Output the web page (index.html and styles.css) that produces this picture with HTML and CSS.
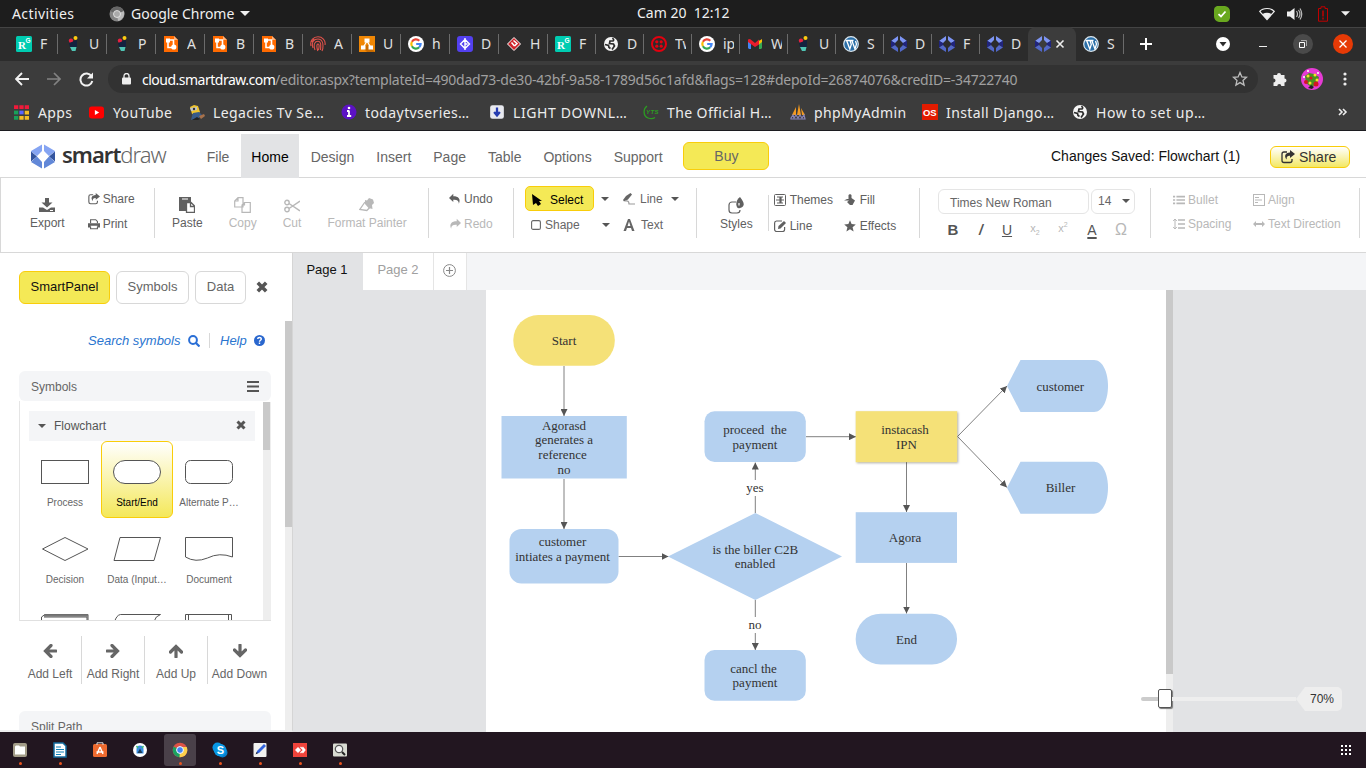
FILE: index.html
```html
<!DOCTYPE html>
<html lang="en">
<head>
<meta charset="utf-8">
<title>SmartDraw - Flowchart</title>
<link rel="stylesheet" href="styles.css">
</head>
<body>
<svg class="defs" aria-hidden="true">
  <defs>
    <marker id="arrow" viewBox="0 0 7 7" refX="7" refY="3.500" markerWidth="7" markerHeight="7" markerUnits="userSpaceOnUse" orient="auto"><path d="M0 0L7 3.500L0 7z" fill="#555"/></marker>
  </defs>
  <symbol id="rg" viewBox="0 0 16 16"><rect width="16" height="16" rx="1.500" fill="#00ccb1"/><text x="2" y="13" font-family="Liberation Serif" font-size="11" font-weight="bold" fill="#fff">R</text><text x="9.500" y="7" font-family="Liberation Sans" font-size="6.500" font-weight="bold" fill="#fff">G</text></symbol>
  <symbol id="pot" viewBox="0 0 16 16"><circle cx="10.500" cy="2" r="2" fill="#fc1"/><circle cx="6" cy="4.700" r="2.200" fill="#e8213f"/><path d="M4 7l8-3v7H5z" fill="#14213f"/><path d="M5 11h6.500l-1 4H7z" fill="#4fc4b5"/></symbol>
  <symbol id="blog" viewBox="0 0 16 16"><path d="M1 0h10l4 4v12H1z" fill="#ff6a00"/><path d="M11 0v4h4z" fill="#ffb27a"/><path d="M5 5v6.500h4M6 4h4.500v5" fill="none" stroke="#fff" stroke-width="1.600"/><path d="M3 2.500h4v4H3z" fill="#fff"/><circle cx="10.800" cy="11" r="2.600" fill="#fff"/></symbol>
  <symbol id="whorl" viewBox="0 0 16 16"><g fill="none" stroke="#e0524a" stroke-width="1.100"><path d="M1 10C-.5 4 4 .8 8 .8S16 4 15 9M3 12C1 6 4 3 8 3s5.500 4 4.800 9M5 14C3 8 5 5.200 8 5.200S11 9 10.500 14M7.800 15c-1-3-1.500-7 .2-7s1 4 .5 6M12 15l1-3M2 6l2-3"/></g></symbol>
  <symbol id="drawio" viewBox="0 0 16 16"><rect width="16" height="16" fill="#f08705"/><path d="M9 9l7 7H8l-5-5z" fill="#c96b00"/><path d="M8 5L4.500 11M8 5l3.500 6" stroke="#fff" stroke-width="1.300"/><path d="M5.500 2.500h5v4h-5zM2 9.500h4.500v4H2zM9.500 9.500H14v4H9.500z" fill="#fff"/></symbol>
  <symbol id="google" viewBox="0 0 16 16"><circle cx="8" cy="8" r="8" fill="#fff"/><g fill="none" stroke-width="2.200"><path d="M11.300 4.700A4.700 4.700 0 0 0 3.900 5.700" stroke="#ea4335"/><path d="M3.900 5.700a4.700 4.700 0 0 0 0 4.600" stroke="#fbbc05"/><path d="M3.900 10.300a4.700 4.700 0 0 0 7.300 1" stroke="#34a853"/><path d="M11.200 11.300A4.700 4.700 0 0 0 12.600 8H8.200" stroke="#4285f4"/></g></symbol>
  <symbol id="dgit" viewBox="0 0 16 16"><rect width="16" height="16" rx="3" fill="#5340f0"/><path d="M8 3.500L12.500 8 8 12.500 3.500 8zM8 2v12M8 8h2.500" fill="none" stroke="#fff" stroke-width="1.400"/></symbol>
  <symbol id="vp" viewBox="0 0 16 16"><path d="M8 1.500L14.500 8 8 14.500 1.500 8z" fill="#d2232a" stroke="#fff"/><path d="M7.500 4.500l3.500 3-2.500 2.500M5.500 6.500L8.500 10" fill="none" stroke="#fff" stroke-width="1.500"/></symbol>
  <symbol id="globe" viewBox="0 0 16 16"><circle cx="8" cy="8" r="7" fill="#f5f5f5"/><path d="M9.500 2q2 2 .5 3H7L6.500 7.500l4 .5 1 2L9 13.500M2 8.500l3.500 1 .5 2 1.500 1" fill="none" stroke="#2c2c2c" stroke-width="1.700"/></symbol>
  <symbol id="twilio" viewBox="0 0 16 16"><circle cx="8" cy="8" r="7" fill="none" stroke="#e3000f" stroke-width="2"/><g fill="#e3000f"><circle cx="5.800" cy="5.800" r="1.600"/><circle cx="10.200" cy="5.800" r="1.600"/><circle cx="5.800" cy="10.200" r="1.600"/><circle cx="10.200" cy="10.200" r="1.600"/></g></symbol>
  <symbol id="gmail" viewBox="0 0 16 16"><path d="M1 4.500h3V13H2l-1-1z" fill="#4285f4"/><path d="M12 4.500h3V12l-1 1h-2z" fill="#34a853"/><path d="M12 5l3-2v3l-3 2.500z" fill="#fbbc04"/><path d="M1 3.500L3 3l5 4 4-3.500V8.500L8 11 1 6z" fill="#ea1c2c"/></symbol>
  <symbol id="wp" viewBox="0 0 16 16"><circle cx="8" cy="8" r="7.300" fill="#2a6fa8" stroke="#dce8f0" stroke-width="1.200"/><path d="M2.500 4.500h4M3.800 5l3 8L8.300 8.500 7 4.500h3.500M9 5l3 8 1.500-5-1-3" fill="none" stroke="#fff" stroke-width="1.300"/></symbol>
  <symbol id="sd" viewBox="0 0 16 16"><path d="M7 0v4L4 7 0 5zM9 0v4l3 3 4-2z" fill="#7d95f5"/><path d="M0 4.500L5 8l-5 3.500zM16 4.500L11 8l5 3.500z" fill="#20247e"/><path d="M7 16v-4L4 9l-4 2.500zM9 16v-4l3-3 4 2.500z" fill="#5268c8"/></symbol>
  <symbol id="caret" viewBox="0 0 8 4"><path d="M0 0h8L4 4z" fill="currentColor"/></symbol>
  <symbol id="x" viewBox="0 0 10 10"><path d="M1.500 1.500l7 7M8.500 1.500l-7 7" stroke="currentColor" stroke-width="3"/></symbol>
  <symbol id="share" viewBox="0 0 14 14"><path d="M6 2H3a2 2 0 0 0-2 2v6.500a2 2 0 0 0 2 2h6a2 2 0 0 0 2-2V9" fill="none" stroke="currentColor" stroke-width="1.300"/><path d="M9 0L14 4 9 8V5.800C6.500 5.600 5.200 6.800 5.800 9.500 2.800 6.500 4 2.600 9 2.400z" fill="currentColor"/></symbol>
  <symbol id="undo" viewBox="0 0 14 12"><path d="M5 0v2.800c6 0 9 3 6.500 8.700C11.600 8 9.500 6.500 5 6.800v2.700L0 4.700z" fill="currentColor"/></symbol>
  <symbol id="list" viewBox="0 0 14 12"><path d="M4 2h10M4 6h10M4 10h10M0 2h2.500M0 6h2.500M0 10h2.500" stroke="currentColor" stroke-width="2"/></symbol>
  <symbol id="arr" viewBox="0 0 14 14"><path d="M13 7H3M8 1.500L2.500 7 8 12.500" fill="none" stroke="#666" stroke-width="3.200" stroke-linecap="round"/></symbol>
</svg>

<header class="system-bar">
  <span class="activities">Activities</span>
  <svg class="chrome-mini" viewBox="0 0 16 16"><circle cx="8" cy="8" r="7.500" fill="#858585"/><path d="M8 8L1 5a8 8 0 0 1 14 0z" fill="#666"/><path d="M8 8l7-3a8 8 0 0 1-6 10z" fill="#bbb"/><circle cx="8" cy="8" r="3.500" fill="#aaa" stroke="#eee" stroke-width=".8"/></svg>
  <span class="app-name">Google Chrome</span>
  <svg class="app-caret"><use href="#caret"/></svg>
  <span class="clock">Cam 20&nbsp; 12:12</span>
  <div class="tray">
    <svg width="16" height="16" viewBox="0 0 16 16"><path d="M3 0h8q5 1 5 6v6q-1 4-4 4H5q-5-1-5-6V4q0-3 3-4z" fill="#69a81f"/><path d="M4.500 8.200L7 10.500l4.500-5" fill="none" stroke="#fff" stroke-width="1.800"/></svg>
    <svg class="wifi" viewBox="0 0 16 14"><path d="M.7 4.500C4 .5 12 .5 15.300 4.500L8 12.500z" fill="none" stroke="#eee" stroke-width="1.200"/><path d="M3.500 7q4.500-2.500 9 0L8 12.500z" fill="#eee"/></svg>
    <svg class="volume" viewBox="0 0 16 14"><path d="M0 4.500h3L7.500 1v12L3 9.500H0z" fill="#eee"/><path d="M9.500 4q2 3 0 6M11.500 3q3 4 0 8M13 1.500q3.500 5.500 0 11" fill="none" stroke="#bbb" stroke-width="1.200"/></svg>
    <svg class="battery" viewBox="0 0 10 16"><path d="M.5 2.500H3V.8h4v1.700h2.500v12.700h-9z" fill="none" stroke="#c00000"/><path d="M5 4.500v6M5 11.500v2" stroke="#c00000" stroke-width="1.500"/></svg>
    <svg class="tray-caret"><use href="#caret"/></svg>
  </div>
</header>

<nav class="tab-strip">
  <div class="tab wide"><svg><use href="#rg"/></svg><span>F</span></div>
  <div class="tab wide"><svg><use href="#pot"/></svg><span>U</span></div>
  <div class="tab wide"><svg><use href="#pot"/></svg><span>P</span></div>
  <div class="tab wide"><svg><use href="#blog"/></svg><span>A</span></div>
  <div class="tab wide"><svg><use href="#blog"/></svg><span>B</span></div>
  <div class="tab wide"><svg><use href="#blog"/></svg><span>B</span></div>
  <div class="tab wide"><svg><use href="#whorl"/></svg><span>A</span></div>
  <div class="tab wide"><svg><use href="#drawio"/></svg><span>U</span></div>
  <div class="tab wide"><svg><use href="#google"/></svg><span>h</span></div>
  <div class="tab wide"><svg><use href="#dgit"/></svg><span>D</span></div>
  <div class="tab wide"><svg><use href="#vp"/></svg><span>H</span></div>
  <div class="tab"><svg><use href="#rg"/></svg><span>F</span></div>
  <div class="tab"><svg><use href="#globe"/></svg><span>D</span></div>
  <div class="tab"><svg><use href="#twilio"/></svg><span>Tw</span></div>
  <div class="tab"><svg><use href="#google"/></svg><span>ip</span></div>
  <div class="tab"><svg><use href="#gmail"/></svg><span>W</span></div>
  <div class="tab"><svg><use href="#pot"/></svg><span>U</span></div>
  <div class="tab"><svg><use href="#wp"/></svg><span>S</span></div>
  <div class="tab"><svg><use href="#sd"/></svg><span>D</span></div>
  <div class="tab"><svg><use href="#sd"/></svg><span>F</span></div>
  <div class="tab before-active"><svg><use href="#sd"/></svg><span>D</span></div>
  <div class="tab active"><svg><use href="#sd"/></svg><svg class="tab-close" viewBox="0 0 10 10"><path d="M1.500 1.500l7 7M8.500 1.500l-7 7" stroke="#eee" stroke-width="1.600"/></svg></div>
  <div class="tab"><svg><use href="#wp"/></svg><span>S</span></div>
  <svg class="new-tab" viewBox="0 0 12 12"><path d="M6 0v12M0 6h12" stroke="#fff" stroke-width="2"/></svg>
  <div class="window-controls">
    <svg width="14" height="14" viewBox="0 0 14 14"><circle cx="7" cy="7" r="7" fill="#fff"/><path d="M3.500 5h7L7 9.500z" fill="#2c2c2c"/></svg>
    <svg width="8" height="14" viewBox="0 0 8 14"><path d="M0 9.500h8" stroke="#eee"/></svg>
    <svg width="20" height="20" viewBox="0 0 20 20"><circle cx="10" cy="10" r="10" fill="#4a4a4a"/><path d="M6.500 8.500h5v5h-5z" fill="none" stroke="#fff"/><path d="M8 6.500h5.500V12" fill="none" stroke="#aaa"/></svg>
    <svg width="20" height="20" viewBox="0 0 20 20"><circle cx="10" cy="10" r="10" fill="#e63a06"/><path d="M6.500 6.500l7 7M13.500 6.500l-7 7" stroke="#fff" stroke-width="1.300"/></svg>
  </div>
</nav>

<div class="address-bar">
  <svg width="14" height="14" viewBox="0 0 14 14"><path d="M14 7H1.500M7 1L1 7l6 6" fill="none" stroke="#f2f2f2" stroke-width="1.900"/></svg>
  <svg class="forward" width="14" height="14" viewBox="0 0 14 14"><path d="M0 7h12.500M7 1l6 6-6 6" fill="none" stroke="#828282" stroke-width="1.700"/></svg>
  <svg class="reload" width="15" height="15" viewBox="0 0 15 15"><path d="M12.500 4.300A6 6 0 1 0 13.300 9" fill="none" stroke="#f2f2f2" stroke-width="2"/><path d="M14 .5v6H8z" fill="#f2f2f2"/></svg>
  <div class="url">
    <svg width="9" height="12" viewBox="0 0 9 12"><path d="M2 5V3a2.500 2.500 0 0 1 5 0v2" fill="none" stroke="#eee" stroke-width="1.300"/><rect y="4.500" width="9" height="7" rx="1" fill="#eee"/></svg>
    <span class="host">cloud.smartdraw.com</span><span class="path">/editor.aspx?templateId=490dad73-de30-42bf-9a58-1789d56c1afd&amp;flags=128#depoId=26874076&amp;credID=-34722740</span>
    <svg class="star" viewBox="0 0 16 16"><path d="M8 1.500l1.900 4.400 4.600.4-3.500 3.100 1.100 4.700L8 11.600l-4.100 2.500L5 9.400 1.500 6.300l4.600-.4z" fill="none" stroke="#bdbdbd" stroke-width="1.300"/></svg>
  </div>
  <svg class="puzzle" viewBox="0 0 16 16"><path d="M1.500 4H5a2 2 0 1 1 4 0h3.500v3.500a2 2 0 1 1 0 4V15H9.300a2 2 0 0 0-4 0H1.500v-3.500a2 2 0 0 0 0-4z" fill="#eee"/></svg>
  <svg class="avatar" viewBox="0 0 22 22"><circle cx="11" cy="11" r="11" fill="#e63bd5"/><path d="M4 8l4-3 5 1 5 3-2 7-6 3-5-4z" fill="#4a8f22"/><g fill="#f3e229"><circle cx="7" cy="8" r="1.500"/><circle cx="14" cy="7" r="1.500"/><circle cx="9" cy="15" r="1.500"/><circle cx="16" cy="12" r="1.500"/></g><g fill="#d31722"><circle cx="5" cy="14" r="2"/><circle cx="15" cy="16" r="2.500"/><circle cx="10" cy="10" r="1.500"/></g><g fill="#fff"><circle cx="7" cy="3" r="1"/><circle cx="17" cy="5" r="1"/><circle cx="3" cy="9" r="1"/></g><path d="M10 17l3 2-2 2-4-1z" fill="#222"/></svg>
  <svg class="dots" viewBox="0 0 4 14"><g fill="#eee"><circle cx="2" cy="2" r="1.600"/><circle cx="2" cy="7" r="1.600"/><circle cx="2" cy="12" r="1.600"/></g></svg>
</div>

<div class="bookmarks">
  <div class="bm b-apps"><svg viewBox="0 0 14 14"><path d="M0 2h4M5 2h4M10 2h4" stroke="#f01a3a" stroke-width="3.500"/><path d="M0 7h4" stroke="#18a05a" stroke-width="3.500"/><path d="M5 7h4" stroke="#5a65ff" stroke-width="3.500"/><path d="M10 7h4M5 12h4M10 12h4" stroke="#f3bd24" stroke-width="3.500"/><path d="M0 12h4" stroke="#18a05a" stroke-width="3.500"/></svg><span>Apps</span></div>
  <div class="bm b-yt"><svg viewBox="0 0 14 12"><rect y=".5" width="14" height="11" rx="2.500" fill="#f00"/><path d="M5.500 3.700L9.500 6l-4 2.300z" fill="#fff"/></svg><span>YouTube</span></div>
  <div class="bm b-leg"><svg viewBox="0 0 16 16"><path d="M1 3l4-2 4 1 2 6-3 3-5-1z" fill="#efc42d"/><path d="M1 4l7-1v3L2 7z" fill="#bfc3cc"/><circle cx="5" cy="5" r="1.200" fill="#333"/><path d="M4 9l6-1 3 3-4 4-7 1 1-4z" fill="#375b89"/><path d="M10 12l5-2 1 2-4 3z" fill="#a6714b"/><path d="M8 13l3 2-2 1H3z" fill="#222"/></svg><span>Legacies Tv Se…</span></div>
  <div class="bm b-tod"><svg viewBox="0 0 16 16"><circle cx="8" cy="8" r="7.500" fill="#5c12c4"/><path d="M8 6.500v5M6 7h2M6 12h4.200" stroke="#fff" stroke-width="1.800"/><circle cx="8" cy="4" r="1.300" fill="#fff"/></svg><span>todaytvseries…</span></div>
  <div class="bm b-light"><svg viewBox="0 0 14 14"><rect x="1" y="1" width="12" height="12" rx="2" fill="#e8e9ef"/><path d="M7 3v7M4.500 7L7 10l2.500-3" fill="none" stroke="#263cb0" stroke-width="2"/></svg><span>LIGHT DOWNL…</span></div>
  <div class="bm b-off"><svg viewBox="0 0 16 16"><path d="M4 2C0 5 0 12 5 14q4 1.500 7-.5" fill="none" stroke="#2c9b22" stroke-width="1.300"/><text x="3" y="10" font-size="6" font-family="Liberation Sans" font-weight="bold" font-style="italic" fill="#2c9b22">YTS</text></svg><span>The Official H…</span></div>
  <div class="bm b-php"><svg viewBox="0 0 16 16"><path d="M2 11L6 3v8zM7 11L9 0l2 11zM11 4l4 7h-3z" fill="#f39a20"/><path d="M1 14l2-3 1 3 2-3 2 3 2-3 2 3 2-3 1 4H1z" fill="none" stroke="#8885bb" stroke-width="1.200"/></svg><span>phpMyAdmin</span></div>
  <div class="bm b-os"><svg viewBox="0 0 16 16"><rect width="16" height="16" fill="#e21b00"/><text x="1" y="11.500" font-size="9.500" textLength="14" font-family="Liberation Sans" font-weight="bold" fill="#fff">OS</text></svg><span>Install Django…</span></div>
  <div class="bm b-how"><svg viewBox="0 0 16 16"><use href="#globe"/></svg><span>How to set up…</span></div>
  <svg class="more" viewBox="0 0 10 8"><path d="M1 1l3 3-3 3M5 1l3 3-3 3" fill="none" stroke="#eee" stroke-width="1.600"/></svg>
</div>

<div class="menu-bar">
  <svg class="logo" viewBox="0 0 24 24"><path d="M11 0v6.500L6 11.500 0 7V6.500zM13 0v6.500l5 5L24 7V6.500z" fill="#85a4f2"/><path d="M0 7l6 5-6 5zM24 7l-6 5 6 5z" fill="#34559f"/><path d="M0 17.500L6 12l5 5.500V24zM24 17.500L18 12l-5 5.500V24z" fill="#6288d8"/></svg>
  <div class="wordmark"><b>smart</b>draw</div>
  <a>File</a><a class="current">Home</a><a>Design</a><a>Insert</a><a>Page</a><a>Table</a><a>Options</a><a>Support</a>
  <button class="buy">Buy</button>
  <span class="saved">Changes Saved: Flowchart (1)</span>
  <button class="share-btn"><svg><use href="#share"/></svg>Share</button>
</div>

<div class="ribbon">
  <section class="grp g-file">
    <div class="big"><svg width="16" height="16" viewBox="0 0 16 16"><path d="M6 1h4v4.500h3.500L8 10.500 2.500 5.500H6z" fill="currentColor"/><path d="M0 10.500h4l4 2.500 4-2.500h4V15H0z" fill="currentColor"/><path d="M11 13.500h3" stroke="#fff"/></svg>Export</div>
    <div class="stack">
      <div class="it"><svg class="i12"><use href="#share"/></svg>Share</div>
      <div class="it"><svg class="i12" viewBox="0 0 14 12"><path d="M3 5V1h6l2 2v2M3 9v2.500h8V9" fill="none" stroke="currentColor" stroke-width="1.300"/><path d="M0 5h14v5h-3V8H3v2H0z" fill="currentColor"/></svg>Print</div>
    </div>
  </section>
  <section class="grp g-clip">
    <div class="big"><svg width="16" height="16" viewBox="0 0 16 16"><path d="M0 0h12v5H7v9H0z" fill="currentColor"/><path d="M3 2h6" stroke="#fff"/><path d="M7.500 5.500h4.500L15.500 9v6.500h-8zM11.500 5.500V9.500h4" fill="#fff" stroke="currentColor" stroke-width="1.300"/></svg>Paste</div>
    <div class="big off copy"><svg width="17" height="16" viewBox="0 0 17 16"><path d="M4 .7h5V10H.7V4zM4 .7V4H.7M10.500 5.500h5.800v9.800H8V8zM10.500 5.500V8H8" fill="#fff" stroke="currentColor" stroke-width="1.200"/></svg>Copy</div>
    <div class="big off cut"><svg width="16" height="14" viewBox="0 0 16 14"><path d="M5 4.500L16 12M5 9.500L16 2" stroke="currentColor" stroke-width="1.500"/><circle cx="3" cy="3.500" r="2.200" fill="none" stroke="currentColor" stroke-width="1.400"/><circle cx="3" cy="10.500" r="2.200" fill="none" stroke="currentColor" stroke-width="1.400"/></svg>Cut</div>
    <div class="big off fmt"><svg width="16" height="16" viewBox="0 0 16 16"><path d="M6 3l2 .5L10 1l4 1.500L15 6l-2 2 .5 4-4-1L6 7z" fill="currentColor"/><path d="M6 5L.8 12.500l7 1 3-3" fill="none" stroke="currentColor" stroke-width="1.300"/></svg>Format Painter</div>
  </section>
  <section class="grp g-undo">
    <div class="stack"><div class="it"><svg class="i12"><use href="#undo"/></svg>Undo</div><div class="it off"><svg class="i12 flip"><use href="#undo"/></svg>Redo</div></div>
  </section>
  <section class="grp g-tools">
    <div class="toolcol first">
      <div class="row"><div class="select"><svg width="10" height="12" viewBox="0 0 10 12"><path d="M0 0l10 7H7l2 3-3 2-2-3-3 2z" fill="#000"/></svg>Select</div><svg class="car"><use href="#caret"/></svg></div>
      <div class="row shape-row"><svg width="10" height="10" viewBox="0 0 10 10"><rect x=".6" y=".6" width="8.800" height="8.800" rx="1.500" fill="none" stroke="currentColor" stroke-width="1.100"/></svg><span>Shape</span><svg class="car"><use href="#caret"/></svg></div>
    </div>
    <div class="toolcol second">
      <div class="row"><svg class="pen" viewBox="0 0 12 12"><path d="M7.500 0L9 1.500 5 6.500l-4 2L0 7 3 3z" fill="currentColor"/><path d="M2 8q4-1 4 3h6" fill="none" stroke="#999" stroke-width="1.200"/></svg><span>Line</span><svg class="car"><use href="#caret"/></svg></div>
      <div class="row"><svg class="pen" viewBox="0 0 12 12"><path d="M5 0h2l4.500 12H9L8 9H4l-1 3H.5zM6 2.500L4.600 7h2.800z" fill="currentColor" fill-rule="evenodd"/></svg><span class="txt">Text</span></div>
    </div>
  </section>
  <section class="grp g-styles">
    <div class="big"><svg width="17" height="18" viewBox="0 0 17 18"><path d="M8 5H4a3 3 0 0 0-3 3v5a3 3 0 0 0 3 3h5a3 3 0 0 0 3-3" fill="none" stroke="currentColor" stroke-width="1.200"/><path d="M12 0q4 5 3.700 7.500T12 11 8.300 7.500 12 0z" fill="currentColor"/><path d="M11 6v2.500" stroke="#fff" stroke-width="1.200"/></svg>Styles</div>
    <div class="rule"></div>
    <div class="pair themes">
      <div class="it"><svg class="i12" viewBox="0 0 12 12"><rect x=".5" y=".5" width="11" height="11" rx="1" fill="none" stroke="currentColor"/><path d="M3 3h3v6H3M9 3H7v6h2M2 6h8" fill="none" stroke="currentColor" stroke-width="1.200"/></svg>Themes</div>
      <div class="it"><svg class="i12" viewBox="0 0 12 12"><path d="M8 1H2.500A2 2 0 0 0 .6 3v6.500a2 2 0 0 0 2 2h6a2 2 0 0 0 2-2V7" fill="none" stroke="currentColor" stroke-width="1.200"/><path d="M4 9l.5-3L10 1l2 2-5.500 5.500z" fill="currentColor"/></svg>Line</div>
    </div>
    <div class="pair">
      <div class="it"><svg class="i12" viewBox="0 0 12 12"><path d="M4.500 1L6 0l1.500 1v3L11 6.500 8.500 11H6L3 8 5 6.500H0L3 5h1.500z" fill="currentColor"/></svg>Fill</div>
      <div class="it"><svg class="i12" viewBox="0 0 12 12"><path d="M6 .3l1.600 3.800 4.200.4-3.200 2.800 1 4.200L6 9.300l-3.600 2.200 1-4.200L.2 4.500l4.200-.4z" fill="currentColor"/></svg>Effects</div>
    </div>
  </section>
  <section class="grp g-font">
    <div class="fields"><div class="field name">Times New Roman</div><div class="field size">14<svg class="car"><use href="#caret"/></svg></div></div>
    <div class="fmtrow"><b>B</b><i>/</i><u>U</u><span class="off">x<sub>2</sub></span><span class="off">x<sup>2</sup></span><span class="color">A</span><span class="off omega">Ω</span></div>
  </section>
  <section class="grp g-para off">
    <div class="pair bullets"><div class="it"><svg class="i12"><use href="#list"/></svg>Bullet</div><div class="it"><svg class="i12" viewBox="0 0 12 12"><path d="M5 2h7M5 6h7M5 10h7" stroke="currentColor" stroke-width="1.500"/><path d="M2 1v10M.2 3L2 1l1.800 2M.2 9L2 11l1.800-2" fill="none" stroke="currentColor"/></svg>Spacing</div></div>
    <div class="pair"><div class="it"><svg class="i12" viewBox="0 0 12 12"><rect x=".5" y=".5" width="11" height="11" fill="none" stroke="currentColor"/><path d="M2 3.500h4M2 6h7M2 8.500h3" stroke="currentColor"/></svg>Align</div><div class="it"><svg class="i12" viewBox="0 0 12 12"><path d="M2 6h8" stroke="currentColor" stroke-width="2"/><path d="M0 6l3-3v6zM12 6L9 3v6z" fill="currentColor"/></svg>Text Direction</div></div>
  </section>
</div>

<main class="workspace">
  <aside class="panel">
    <div class="panel-tabs"><button class="on">SmartPanel</button><button>Symbols</button><button>Data</button><svg><use href="#x"/></svg></div>
    <div class="panel-scroll">
      <div class="panel-body">
        <div class="links"><span>Search symbols</span><svg width="12" height="12" viewBox="0 0 12 12"><circle cx="5" cy="5" r="3.900" fill="none" stroke="#2a6fd6" stroke-width="2"/><path d="M8 8l3.500 3.500" stroke="#2a6fd6" stroke-width="2.200"/></svg><span class="help">Help</span><svg width="11" height="11" viewBox="0 0 11 11"><circle cx="5.500" cy="5.500" r="5.500" fill="#2a67ce"/><path d="M3.700 4.100C3.700 2 7.300 2 7.300 4c0 1.300-1.800 1.200-1.800 2.700M5.500 7.500V9" fill="none" stroke="#fff" stroke-width="1.400"/></svg></div>
        <div class="section-head">Symbols<svg width="12" height="11" viewBox="0 0 12 11"><path d="M0 1h12M0 5.500h12M0 10h12" stroke="#555" stroke-width="2"/></svg></div>
        <div class="library">
          <div class="library-body">
            <div class="lib-head"><svg class="car"><use href="#caret"/></svg><span>Flowchart</span><svg class="lib-x"><use href="#x"/></svg></div>
            <div class="cells">
              <div class="cell"><svg viewBox="0 0 50 26"><rect x="1.500" y="1.500" width="47" height="23"/></svg>Process</div>
              <div class="cell picked"><svg viewBox="0 0 50 26"><rect x="1.500" y="1.500" width="47" height="23" rx="11.500"/></svg>Start/End</div>
              <div class="cell"><svg viewBox="0 0 50 26"><rect x="1.500" y="1.500" width="47" height="23" rx="5"/></svg>Alternate P…</div>
              <div class="cell"><svg viewBox="0 0 50 26"><path d="M2.500 13L25 1.500 48 13 25 24.500z"/></svg>Decision</div>
              <div class="cell"><svg viewBox="0 0 50 26"><path d="M8 1.500h40.500L42 24.500H2z"/></svg>Data (Input…</div>
              <div class="cell"><svg viewBox="0 0 50 26"><path d="M1.500 1.500h47V21q-13-5-25 1-12 5-22-1z"/></svg>Document</div>
              <div class="cell"><svg viewBox="0 0 50 26"><path d="M1.500 25V4L5 1.500h43V25M4 4h43v20"/><path d="M4 2.500h44" stroke-width="2.500" stroke="#777"/></svg></div>
              <div class="cell"><svg viewBox="0 0 50 26"><path d="M2.500 9q2-7 6-7.500h40q-5 1.500-6.500 7"/></svg></div>
              <div class="cell"><svg viewBox="0 0 50 26"><path d="M1.500 25V1.500h46V25M4.500 1.500V25M44.500 1.500V25"/></svg></div>
            </div>
          </div>
          <div class="lib-scroll"><div></div></div>
        </div>
        <div class="adds">
          <div><svg><use href="#arr"/></svg>Add Left</div>
          <div><svg class="r180"><use href="#arr"/></svg>Add Right</div>
          <div><svg class="r90"><use href="#arr"/></svg>Add Up</div>
          <div><svg class="r270"><use href="#arr"/></svg>Add Down</div>
        </div>
        <div class="section-head split">Split Path</div>
      </div>
      <div class="panel-bar"><div></div></div>
    </div>
  </aside>

  <div class="editor">
    <div class="page-tabs"><div class="pt on">Page 1</div><div class="pt two">Page 2</div><div class="pt plus"><svg width="13" height="13" viewBox="0 0 13 13"><circle cx="6.500" cy="6.500" r="5.900" fill="none" stroke="#888"/><path d="M6.500 3v7M3 6.500h7" stroke="#888" stroke-width="1.200"/></svg></div></div>
    <div class="canvas">
      <svg class="paper" viewBox="486 290 680 442">
        <g fill="none" stroke="#808080" stroke-width="1">
          <path d="M564 366v50" marker-end="url(#arrow)"/><path d="M564 479v50" marker-end="url(#arrow)"/>
          <path d="M618.500 556.500h50" marker-end="url(#arrow)"/>
          <path d="M755.300 496v17"/><path d="M755.300 480v-17.500" marker-end="url(#arrow)"/>
          <path d="M755.300 600v17"/><path d="M755.300 633v17" marker-end="url(#arrow)"/>
          <path d="M806 436.700h50" marker-end="url(#arrow)"/>
          <path d="M906.500 462v50" marker-end="url(#arrow)"/><path d="M906.500 563v50.500" marker-end="url(#arrow)"/>
          <path d="M957.500 436.500L1007 386" marker-end="url(#arrow)"/><path d="M957.500 436.500L1007 487.500" marker-end="url(#arrow)"/>
        </g>
        <g class="blue">
          <rect x="501.500" y="416" width="125.300" height="62.500"/>
          <rect x="509.500" y="529" width="109" height="54.500" rx="12"/>
          <rect x="704.500" y="411.300" width="101.300" height="50.700" rx="10"/>
          <path d="M668 556.500L755.300 513 842 556.500 755.300 600z"/>
          <rect x="704.500" y="650" width="101.300" height="50.700" rx="10"/>
          <rect x="855.700" y="512.200" width="101.300" height="50.700"/>
          <rect x="855.700" y="613.700" width="101.300" height="50.700" rx="25"/>
          <path d="M1007 386L1020.500 360H1094C1103 360 1108 373 1108 386S1103 412 1094 412H1020.500z"/>
          <path d="M1007 487.700L1020.500 461.700H1094C1103 461.700 1108 474.700 1108 487.700S1103 513.700 1094 513.700H1020.500z"/>
        </g>
        <rect class="yel" x="513.300" y="315" width="101.500" height="50.800" rx="25"/>
        <rect class="yel shadow" x="855.700" y="411.200" width="101.500" height="51"/>
        <g class="labels">
          <text x="564" y="345">Start</text>
          <text x="564" y="430">Agorasd</text><text x="564" y="444.300">generates a</text><text x="562.500" y="459">reference</text><text x="564" y="474">no</text>
          <text x="562.500" y="546">customer</text><text x="562.500" y="561">intiates a payment</text>
          <text x="755" y="434" xml:space="preserve">proceed  the</text><text x="755" y="449">payment</text>
          <text x="755" y="492">yes</text><text x="755.300" y="554">is the biller C2B</text><text x="755" y="568">enabled</text><text x="755" y="629">no</text>
          <text x="753.500" y="673">cancl the</text><text x="755" y="687">payment</text>
          <text x="905" y="434">instacash</text><text x="906.500" y="449">IPN</text><text x="905" y="542">Agora</text><text x="906.500" y="644">End</text>
          <text x="1060.300" y="391">customer</text><text x="1060.500" y="492">Biller</text>
        </g>
      </svg>
      <div class="canvas-bar"><div></div></div>
      <div class="zoom"><span class="low"></span><span class="thumb"></span><span class="high"></span><span class="pct">70%</span></div>
    </div>
  </div>
</main>

<footer class="taskbar">
  <div class="app run"><svg viewBox="0 0 16 16"><rect x="1" y="1" width="14" height="14" rx="2" fill="#a39c88"/><path d="M4 3.500h3l1 1h5v8H3v-8z" fill="#fff"/></svg></div>
  <div class="app run"><svg viewBox="0 0 16 16"><path d="M2 1h9l3 3v11H2z" fill="#fff" stroke="#146c9e" stroke-width="1.500"/><path d="M4 5h5M4 7.500h8M4 10h8M4 12.500h5" stroke="#1282b8" stroke-width="1.200"/></svg></div>
  <div class="app"><svg viewBox="0 0 16 16"><rect x="1" y="2" width="14" height="13" rx="1.500" fill="#ee6a2f"/><path d="M5 3V.8h6V3" fill="none" stroke="#ddd"/><path d="M8 5l-3 7M8 5l3 7M4.500 10h7" stroke="#fff" stroke-width="1.400"/></svg></div>
  <div class="app"><svg viewBox="0 0 16 16"><circle cx="8" cy="8" r="7" fill="#fff"/><path d="M4.500 7a3.500 3.500 0 0 1 7 0v4.500h-7z" fill="#3a8de0"/><path d="M8 6.500l2.500 4.500h-5z" fill="#1b3b57"/><path d="M4.500 4L6 6M11.500 4L10 6" stroke="#3bbb70" stroke-width="1.300"/></svg></div>
  <div class="app run focused"><svg viewBox="0 0 16 16"><circle cx="8" cy="8" r="7.300" fill="#de5246"/><path d="M8 8L1.700 4.400A7.300 7.300 0 0 0 8 15.300L11 9z" fill="#1aa260"/><path d="M8 8l-.5 7.300A7.300 7.300 0 0 0 14.700 5H8z" fill="#fdd14c"/><circle cx="8" cy="8" r="3.400" fill="#4385f4" stroke="#fff"/></svg></div>
  <div class="app run"><svg viewBox="0 0 16 16"><circle cx="5.500" cy="5.500" r="5" fill="#0897e4"/><circle cx="10.500" cy="10.500" r="5" fill="#087fcd"/><circle cx="8" cy="8" r="6.300" fill="#0897e4"/><text x="4.800" y="12" font-size="11" font-weight="bold" font-family="Liberation Sans" fill="#fff">S</text></svg></div>
  <div class="app run"><svg viewBox="0 0 16 16"><rect x="1.500" y="1" width="13" height="14" rx="1" fill="#f2f2f0"/><path d="M4 12l1-3 7-7 2 2-7 7z" fill="#3263dc"/><path d="M3.500 12.500l1.200-2.500L6 11z" fill="#222"/></svg></div>
  <div class="app run"><svg viewBox="0 0 16 16"><rect x="1" y="1" width="14" height="14" fill="#ef443b"/><path d="M6 5l3 3-3 3-3-3z" fill="#fff"/><path d="M8.500 5l3 3-3 3M10.500 5l2.500 3-2.500 3" fill="none" stroke="#fff" stroke-width="1.200"/></svg></div>
  <div class="app run"><svg viewBox="0 0 16 16"><rect x="1" y="1.500" width="14" height="13" rx="1" fill="#d9dbd2"/><circle cx="7" cy="7" r="3.700" fill="#f5f5f5" stroke="#555" stroke-width="1.200"/><path d="M10 10l3 3" stroke="#222" stroke-width="2"/></svg></div>
  <svg class="grid-dots" viewBox="0 0 10 10"><path d="M0 1h2M4 1h2M8 1h2M0 5h2M4 5h2M8 5h2M0 9h2M4 9h2M8 9h2" stroke="#fff" stroke-width="2"/></svg>
</footer>
</body>
</html>
```
FILE: styles.css
```css
* { box-sizing: border-box; }
body { margin: 0; width: 1366px; height: 768px; overflow: hidden; display: flex; flex-direction: column; font-family: "Liberation Sans", Arial, sans-serif; color: #555; background: #fff; }
svg { display: block; flex: none; }
button { font: inherit; padding: 0; }
.defs { width: 0; height: 0; position: absolute; }

/* desktop top bar */
.system-bar { height: 27px; flex: none; background: #1d1d1d; color: #f0f0f0; display: flex; align-items: center; position: relative; font: 14px "Noto Sans", sans-serif; white-space: nowrap; }
.activities { width: 63px; margin-left: 12px; letter-spacing: .4px; }
.chrome-mini { width: 16px; height: 16px; margin: 0 6px 0 34px; }
.app-caret { width: 10px; height: 5px; margin-left: 5px; }
.app-name { width: 104px; }
.clock { position: absolute; left: 637px; top: 3px; }
.tray { display: flex; align-items: center; margin-left: auto; margin-right: 16px; }
.wifi { width: 16px; height: 14px; margin-left: 29px; }
.volume { width: 16px; height: 14px; margin-left: 12px; }
.battery { width: 10px; height: 16px; margin-left: 15px; }
.tray-caret { width: 9px; height: 5px; margin-left: 13px; }

/* browser tabs */
.tab-strip { height: 34px; flex: none; background: #2c2c2c; border-top: 1px solid #444; padding-left: 9px; display: flex; align-items: center; padding-bottom: 1px; }
.tab { width: 48px; height: 20px; border-right: 1px solid #6b6b6b; display: flex; align-items: center; padding-left: 7px; color: #e0e0e0; font: 14px "Noto Sans", sans-serif; }
.tab.wide { width: 49px; }
.tab svg { width: 16px; height: 16px; }
.tab span { margin-left: 8px; width: 11px; overflow: hidden; white-space: nowrap; line-height: 20px; }
.tab.before-active { border-color: transparent; }
.tab.active { background: #3c3c3c; height: 34px; border: 0; border-radius: 8px 8px 0 0; }
.tab svg.tab-close { width: 10px; height: 10px; margin-left: 4px; }
.new-tab { width: 12px; height: 12px; margin-left: 16px; }
.window-controls { margin-left: auto; margin-right: 13px; display: flex; align-items: center; }
.window-controls svg + svg { margin-left: 29px; }
.window-controls svg:nth-child(3) { margin-left: 26px; }
.window-controls svg:nth-child(4) { margin-left: 20px; }

/* address bar */
.address-bar { height: 36px; flex: none; background: #3c3c3c; display: flex; align-items: center; padding-left: 15px; }
.forward { margin-left: 18px; }
.reload { margin-left: 18px; }
.url { width: 1150px; height: 28px; border-radius: 14px; margin-left: 14px; background: #323232; display: flex; align-items: center; padding-left: 14px; font: 14px "Noto Sans", sans-serif; white-space: nowrap; }
.host { color: #fff; margin-left: 11px; width: 133px; letter-spacing: -.5px; }
.path { color: #a0a0a0; width: 744px; letter-spacing: -.22px; }
.star { width: 16px; height: 16px; margin-left: auto; margin-right: 10px; }
.puzzle { width: 16px; height: 16px; margin-left: 14px; }
.avatar { width: 22px; height: 22px; margin-left: 13px; }
.dots { width: 4px; height: 14px; margin-left: 20px; }

/* bookmarks */
.bookmarks { height: 34px; flex: none; background: #3c3c3c; border-bottom: 1px solid #1c1c20; display: flex; align-items: center; padding: 0 0 3px 14px; color: #ececec; font: 14px "Noto Sans", sans-serif; white-space: nowrap; letter-spacing: .4px; }
.bm { display: flex; align-items: center; gap: 8px; }
.bm svg { width: 16px; height: 16px; }
.b-apps { width: 75px; }
.b-apps, .b-yt { gap: 9px; }
.b-apps svg, .b-yt svg { width: 15px; height: 15px; }
.b-yt { width: 100px; }
.b-leg { width: 152px; }
.b-tod { width: 148px; }
.b-light { width: 154px; letter-spacing: .6px; }
.b-off { width: 147px; }
.b-php { width: 132px; }
.b-os { width: 150px; }
.b-how { letter-spacing: .55px; }
.more { width: 10px; height: 8px; margin-left: auto; margin-right: 18px; }

/* application menu */
.menu-bar { height: 47px; flex: none; border-bottom: 1px solid #d8d8d8; display: flex; align-items: center; padding-left: 31px; font-size: 14px; color: #666; padding-top: 3px; }
.logo { width: 24px; height: 25px; margin-top: 2px; }
.wordmark { font: 300 22px/26px "Noto Sans", sans-serif; letter-spacing: -1px; width: 106px; margin-left: 7px; margin-right: 28.500px; padding-bottom: 3px; white-space: nowrap; }
.wordmark b { font-weight: 600; color: #333; }
.menu-bar a { height: 44px; line-height: 47px; padding: 0 10.300px; margin-right: 1.400px; }
.menu-bar a.current { color: #000; background: #e2e3e5; }
.buy { width: 86px; height: 28px; margin-left: 9px; background: #f4e956; border: 1px solid #f9cd0a; border-radius: 6px; color: #666; }
.saved { margin-left: auto; color: #111; width: 190px; white-space: nowrap; }
.share-btn { width: 80px; height: 22px; margin: 2px 16px 0 29px; display: flex; align-items: center; padding-left: 10px; gap: 4px; color: #333; border: 1px solid #f9cd0a; border-radius: 6px; background: linear-gradient(#fff, #f3e864); }
.share-btn svg { width: 14px; height: 14px; }

/* ribbon */
.ribbon { height: 75px; flex: none; border-left: 1px solid #d8d8d8; border-bottom: 1px solid #d8d8d8; display: flex; padding-top: 10px; font-size: 12px; color: #666; line-height: 14px; white-space: nowrap; }
.grp { height: 50px; border-right: 1px solid #d8d8d8; display: flex; }
.big { display: flex; flex-direction: column; align-items: center; justify-content: flex-end; height: 42px; gap: 3px; }
.big, .it { color: #606060; }
.off, .off .it, .big.off, .it.off { color: #b8b8b8; }
.it { display: flex; align-items: center; gap: 3px; height: 14px; }
.i12 { width: 12px; height: 12px; }
.flip { transform: scaleX(-1); }
.stack { padding-top: 4px; display: flex; flex-direction: column; gap: 11px; }
.car { width: 8px; height: 4px; color: #555; }
.g-file { width: 154px; padding-left: 29px; }
.g-file .stack { margin-left: 23px; }
.g-clip { width: 274px; padding-left: 17px; }
.copy { margin-left: 26px; }
.cut { margin-left: 26px; }
.fmt { margin-left: 26px; }
.g-undo { width: 85px; padding-left: 20px; }
.g-tools { width: 183px; padding-left: 11px; }
.toolcol { margin-top: -2px; }
.row { display: flex; align-items: center; height: 26px; }
.first { width: 98px; }
.first .row .car { margin-left: 7px; }
.select { width: 69px; height: 25px; margin-top: -1px; display: flex; align-items: center; gap: 8px; padding: 2px 0 0 6px; color: #000; background: #f4e956; border: 1px solid #f9cd0a; border-radius: 5px; }
.first .shape-row { padding-left: 6px; gap: 4px; }
.first .shape-row .car { margin-left: 18px; }
.second .row span { margin-left: 5px; width: 25px; }
.second .row .txt { margin-left: 6px; }
.second .car { margin-left: 6px; }
.pen { width: 12px; height: 12px; }
.g-styles { width: 223px; padding-left: 23px; }
.g-styles .big { height: 43px; gap: 2px; }
.rule { width: 1px; height: 36px; background: #d8d8d8; margin: 7px 5px 0 15px; }
.pair { padding-top: 5px; display: flex; flex-direction: column; gap: 12px; }
.pair .it { gap: 4px; }
.themes { width: 70px; }
.g-font { width: 231px; padding: 1px 0 0 18px; flex-direction: column; }
.fields { display: flex; gap: 2px; }
.field { height: 25px; border: 1px solid #e5e5e5; border-radius: 6px; line-height: 26px; padding-left: 11px; }
.field.name { width: 151px; }
.field.size { width: 44px; padding-left: 6px; display: flex; align-items: center; gap: 10px; line-height: 23px; letter-spacing: .2px; }
.field.size .car { margin-top: -2px; }
.fmtrow { display: grid; grid-template-columns: repeat(7, 28px); text-align: center; line-height: 18px; padding: 7px 0 0 1px; font-size: 14px; color: #555; }
.fmtrow b { font-size: 15px; }
.fmtrow i { font-weight: bold; }
.fmtrow u { margin-left: -4px; }
.fmtrow .off { color: #b8b8b8; font-size: 11px; line-height: 14px; margin-left: -4px; }
.fmtrow sub, .fmtrow sup { font-size: 7px; line-height: 0; }
.fmtrow .color { text-decoration: underline; text-decoration-thickness: 2px; text-underline-offset: 2px; margin-left: -2px; }
.fmtrow .omega { font-size: 16px; line-height: 18px; margin-left: 0; }
.g-para { width: 209px; padding-left: 22px; }
.g-para .pair { gap: 10px; }
.g-para .it { gap: 3px; }
.bullets { width: 80px; }

/* smart panel */
.workspace { height: 479px; flex: none; display: flex; }
.panel { width: 293px; border-right: 1px solid #d5d5d5; display: flex; flex-direction: column; padding-top: 18px; border-bottom: 2px solid #eee; }
.panel-tabs { display: flex; gap: 6px; align-items: center; padding-left: 19px; font-size: 13px; }
.panel-tabs button { height: 33px; background: #fff; border: 1px solid #d8d8d8; border-radius: 6px; color: #666; width: 73px; white-space: nowrap; padding: 0 0 2px; }
.panel-tabs button:nth-child(3) { width: 51px; }
.panel-tabs button.on { width: 91px; color: #111; background: #f4e956; border-color: #f9cd0a; }
.panel-tabs svg { width: 12px; height: 12px; margin: -2px 0 0 4px; }
.panel-scroll { display: flex; margin-top: 17px; height: 409px; overflow: hidden; }
.panel-body { width: 285px; padding-left: 19px; }
.panel-bar { width: 7px; background: #eee; }
.panel-bar div { height: 206px; background: #c9c9c9; }
.links { display: flex; align-items: center; height: 15px; margin: 12px 0 23px 69px; font: italic 13px "Liberation Sans", sans-serif; color: #2a75cf; white-space: nowrap; }
.links span { width: 93px; }
.links svg { margin-left: 7px; }
.links .help { border-left: 1px solid #d8d8d8; margin-left: 9px; padding-left: 10px; width: 38px; }
.links .help + svg { margin-left: 7px; }
.section-head { width: 252px; height: 30px; padding: 2px 12px 0; display: flex; justify-content: space-between; align-items: center; font-size: 12px; background: #f4f5f7; border-radius: 6px; color: #666; }
.section-head svg { margin-top: -2px; }
.library { width: 252px; height: 220px; border-left: 1px solid #e5e5e5; border-bottom: 1px solid #e0e0e0; display: flex; justify-content: space-between; overflow: hidden; }
.library-body { padding: 10px 0 0 9px; width: 236px; }
.lib-head { height: 30px; background: #f4f5f7; display: flex; align-items: center; font-size: 12px; padding: 0 9px; width: 226px; }
.lib-head span { margin-left: 8px; }
.lib-head .lib-x { width: 10px; height: 10px; margin: -2px 0 0 auto; }
.cells { display: grid; grid-template-columns: repeat(3, 72px); grid-auto-rows: 77px; }
.cell { display: flex; flex-direction: column; align-items: center; padding-top: 18px; gap: 12px; font-size: 10px; line-height: 12px; color: #666; }
.cell svg { width: 50px; height: 26px; fill: #fff; stroke: #555; stroke-width: 1; }
.picked { color: #000; background: linear-gradient(#fff, #f4e85a); border: 1px solid #f9cd0a; border-radius: 6px; padding-top: 17px; }
.lib-scroll { width: 8px; background: #eee; margin-top: 1px; }
.lib-scroll div { width: 7px; height: 48px; background: #c9c9c9; }
.adds { display: grid; grid-template-columns: repeat(4, 63px); margin-top: 15px; height: 48px; font-size: 12px; }
.adds div { border-right: 1px solid #d8d8d8; display: flex; flex-direction: column; align-items: center; padding-top: 8px; gap: 9px; line-height: 14px; white-space: nowrap; color: #666; }
.adds div:last-child { border: 0; }
.adds svg { width: 14px; height: 14px; }
.r180 { transform: rotate(180deg); }
.r90 { transform: rotate(90deg); }
.r270 { transform: rotate(270deg); }
.split { margin-top: 27px; }

/* drawing area */
.editor { width: 1073px; display: flex; flex-direction: column; }
.page-tabs { height: 37px; background: #f4f5f7; display: flex; font-size: 13px; line-height: 34px; text-align: center; }
.pt { background: #fff; border-right: 1px solid #e5e5e5; }
.pt.on { width: 70px; background: #e2e3e5; color: #111; border-color: #e2e3e5; padding-right: 1px; }
.two { width: 71px; color: #a0a0a0; }
.plus { width: 33px; padding: 11px 0 0 9px; }
.canvas { height: 442px; background: #e2e3e5; display: flex; padding-left: 193px; position: relative; }
.paper { width: 680px; height: 442px; background: #fff; }
.blue { fill: #b5d1f0; }
.yel { fill: #f5e178; }
.shadow { filter: drop-shadow(1px 1px 1px rgba(0, 0, 0, .3)); }
.labels { font: 13px "Liberation Serif", serif; fill: #333; text-anchor: middle; }
.canvas-bar { width: 7px; background: #eee; }
.canvas-bar div { height: 384px; background: #c9c9c9; }
.zoom { position: absolute; left: 848px; top: 397px; height: 24px; display: flex; align-items: center; }
.low { width: 17px; height: 4px; background: #ccc; border-radius: 2px 0 0 2px; }
.thumb { width: 14px; height: 19px; margin-top: -1px; background: #fff; border: 1px solid #555; border-radius: 2px; box-shadow: 1px 1px 1px #777; }
.high { width: 124px; height: 4px; background: #eee; }
.pct { width: 46px; height: 24px; background: #eee; font-size: 12px; line-height: 24px; padding-left: 14px; color: #333; border-radius: 5px; clip-path: polygon(0 50%, 9px 0, 100% 0, 100% 100%, 9px 100%); }

/* launcher */
.taskbar { height: 36px; flex: none; background: #221620; display: flex; align-items: center; padding-left: 4px; }
.app { width: 32px; height: 32px; margin-right: 8px; display: flex; flex-direction: column; align-items: center; padding-top: 8px; border-radius: 3px; }
.app svg { width: 16px; height: 16px; }
.run::after { content: ""; width: 3px; height: 3px; border-radius: 50%; background: #e95420; margin-top: 4px; }
.focused { background: #4a4049; }
.grid-dots { width: 10px; height: 10px; margin-left: auto; margin-right: 15px; }
```
